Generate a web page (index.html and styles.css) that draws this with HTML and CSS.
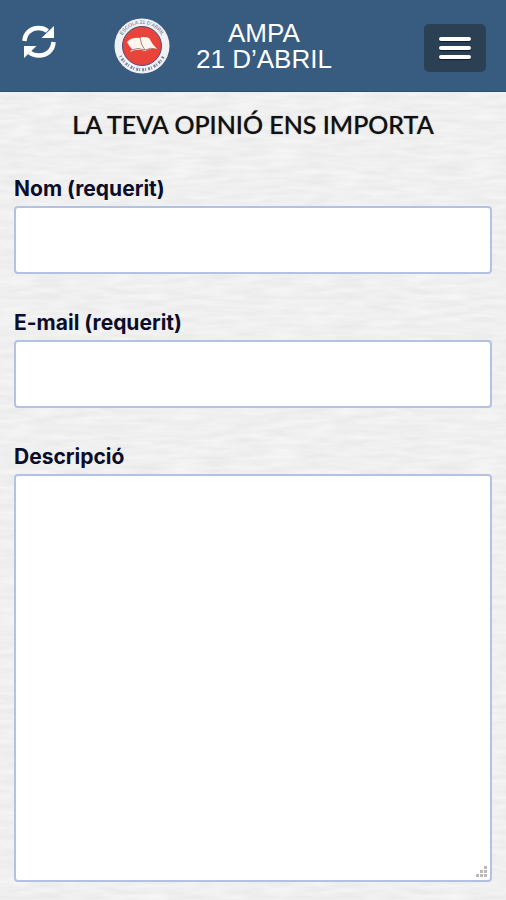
FILE: index.html
```html
<!DOCTYPE html>
<html lang="ca">
<head>
    <meta charset="UTF-8">
    <meta name="viewport" content="width=device-width, initial-scale=1.0">
    <title>AMPA 21 D’ABRIL</title>
    <link rel="stylesheet" href="styles.css">
</head>
<body>
    <header class="header">
        <button class="refresh" type="button" aria-label="Actualitza">
            <svg viewBox="0 0 34 36" width="34" height="36">
                <path d="M2.500 17C3 9 9 4 16.500 4C20 4 23 5 25.500 7" fill="none" stroke="#fff" stroke-width="4.500"/>
                <path d="M32 2V14H19.500Z" fill="#fff"/>
                <path d="M31.500 18C31 26.500 24.500 31.500 17 31.500C13 31.500 10 30.500 7.500 28.500" fill="none" stroke="#fff" stroke-width="4.500"/>
                <path d="M2 34V22H14.500Z" fill="#fff"/>
            </svg>
        </button>
        <div class="brand">
            <svg class="logo" viewBox="0 0 56 56" width="56" height="56">
                <defs>
                    <path id="ring-top" d="M6.500 34A22.300 22.300 0 1 1 49.500 34"/>
                </defs>
                <circle cx="28" cy="28" r="27.500" fill="#f0f1f4"/>
                <circle cx="28" cy="28" r="19.500" fill="#e8443c" stroke="#514a78" stroke-width="1"/>
                <text class="logo-text"><textPath href="#ring-top" startOffset="50%" text-anchor="middle">ESCOLA 21 D’ABRIL</textPath></text>
                <path d="M6.500 38A23.700 23.700 0 0 0 49.500 38" fill="none" stroke="#7d86a0" stroke-width="3" stroke-dasharray="1 2 2 1"/>
                <path d="M13 24Q18 19 26 20Q29 18 35 20Q38 26 43 31Q36 30 31 33Q23 30 16 34L18 31Q15 28 13 24Z" fill="#fff7ee"/>
                <path d="M17 32Q24 29 31 32Q37 29 42 31M26 20Q27 27 31 32" fill="none" stroke="#874a48" stroke-width="0.700"/>
            </svg>
            <div class="brand-name">AMPA<br>21 D’ABRIL</div>
        </div>
        <button class="menu" type="button" aria-label="Menú">
            <span class="menu-bar"></span>
            <span class="menu-bar"></span>
            <span class="menu-bar"></span>
        </button>
    </header>
    <main class="content">
        <h1 class="title">LA TEVA OPINIÓ ENS IMPORTA</h1>
        <form class="form">
            <div class="field">
                <label class="label" for="nom">Nom (requerit)</label>
                <input class="control" type="text" id="nom" name="nom" required>
            </div>
            <div class="field">
                <label class="label" for="email">E-mail (requerit)</label>
                <input class="control" type="email" id="email" name="email" required>
            </div>
            <div class="field">
                <label class="label" for="descripcio">Descripció</label>
                <textarea class="control message" id="descripcio" name="descripcio"></textarea>
            </div>
        </form>
    </main>
</body>
</html>
```
FILE: styles.css
```css
* {
    box-sizing: border-box;
}
body {
    margin: 0;
    min-height: 100vh;
    background-color: #efefef;
    /* paper grain */
    background-image: url("data:image/svg+xml,%3Csvg xmlns='http://www.w3.org/2000/svg' width='300' height='300'%3E%3Cfilter id='p' x='0' y='0' width='100%25' height='100%25' color-interpolation-filters='sRGB'%3E%3CfeTurbulence type='fractalNoise' baseFrequency='0.03 0.2' numOctaves='2' stitchTiles='stitch'/%3E%3CfeColorMatrix values='0.07 0 0 0 0.905 0.07 0 0 0 0.905 0.07 0 0 0 0.905 0 0 0 0 1'/%3E%3C/filter%3E%3Crect width='300' height='300' filter='url(%23p)'/%3E%3C/svg%3E");
    font-family: Inter, "Liberation Sans", sans-serif;
    color: #0b0d2b;
}
.header {
    display: flex;
    align-items: center;
    height: 92px;
    padding: 0 20px 0 22px;
    background-color: #385b80;
    border-bottom: 1px solid #28506f;
}
.refresh {
    padding: 0;
    border: 0;
    background: none;
    margin-bottom: 8px;
    cursor: pointer;
}
.refresh svg,
.logo {
    display: block;
}
.brand {
    display: flex;
    align-items: center;
    gap: 26px;
    margin-left: 58px;
}
.logo-text {
    font: 5px "Liberation Sans", sans-serif;
    fill: #56617e;
}
.brand-name {
    font-family: "Liberation Sans", Arial, sans-serif;
    font-size: 26px;
    line-height: 26px;
    text-align: center;
    color: #fff;
}
.menu {
    display: flex;
    flex-direction: column;
    align-items: center;
    justify-content: center;
    gap: 5px;
    width: 62px;
    height: 48px;
    margin-left: auto;
    margin-top: 5px;
    padding: 0;
    border: 0;
    border-radius: 5px;
    background-color: #2c4054;
    cursor: pointer;
}
.menu-bar {
    width: 32px;
    height: 4px;
    border-radius: 2px;
    background-color: #fff;
    box-shadow: 0 1px 1px #0d1838;
}
.content {
    padding: 16px 14px 20px;
}
.title {
    margin: 0 0 36px;
    font-family: Lato, sans-serif;
    font-size: 25px;
    font-weight: 500;
    line-height: 32px;
    text-align: center;
    color: #111;
    text-shadow: 0 0 1px #666;
}
.form {
    display: flex;
    flex-direction: column;
    gap: 36px;
}
.label {
    display: block;
    margin-bottom: 4px;
    font-size: 21px;
    font-weight: 700;
    line-height: 26px;
}
.control {
    display: block;
    width: 100%;
    height: 68px;
    padding: 12px;
    border: 2px solid #b3c1e2;
    border-radius: 4px;
    background-color: #fff;
    font: inherit;
    font-size: 20px;
}
.message {
    height: 408px;
    resize: vertical;
}
.message::-webkit-resizer {
    background: url("data:image/svg+xml,%3Csvg xmlns='http://www.w3.org/2000/svg' width='15' height='15' fill='%23b8b8b8'%3E%3Cpath d='M9 1h3v3h-3zM9 5h3v3h-3zM5 5h3v3h-3zM9 9h3v3h-3zM5 9h3v3h-3zM1 9h3v3h-3z'/%3E%3C/svg%3E") no-repeat;
}
```
